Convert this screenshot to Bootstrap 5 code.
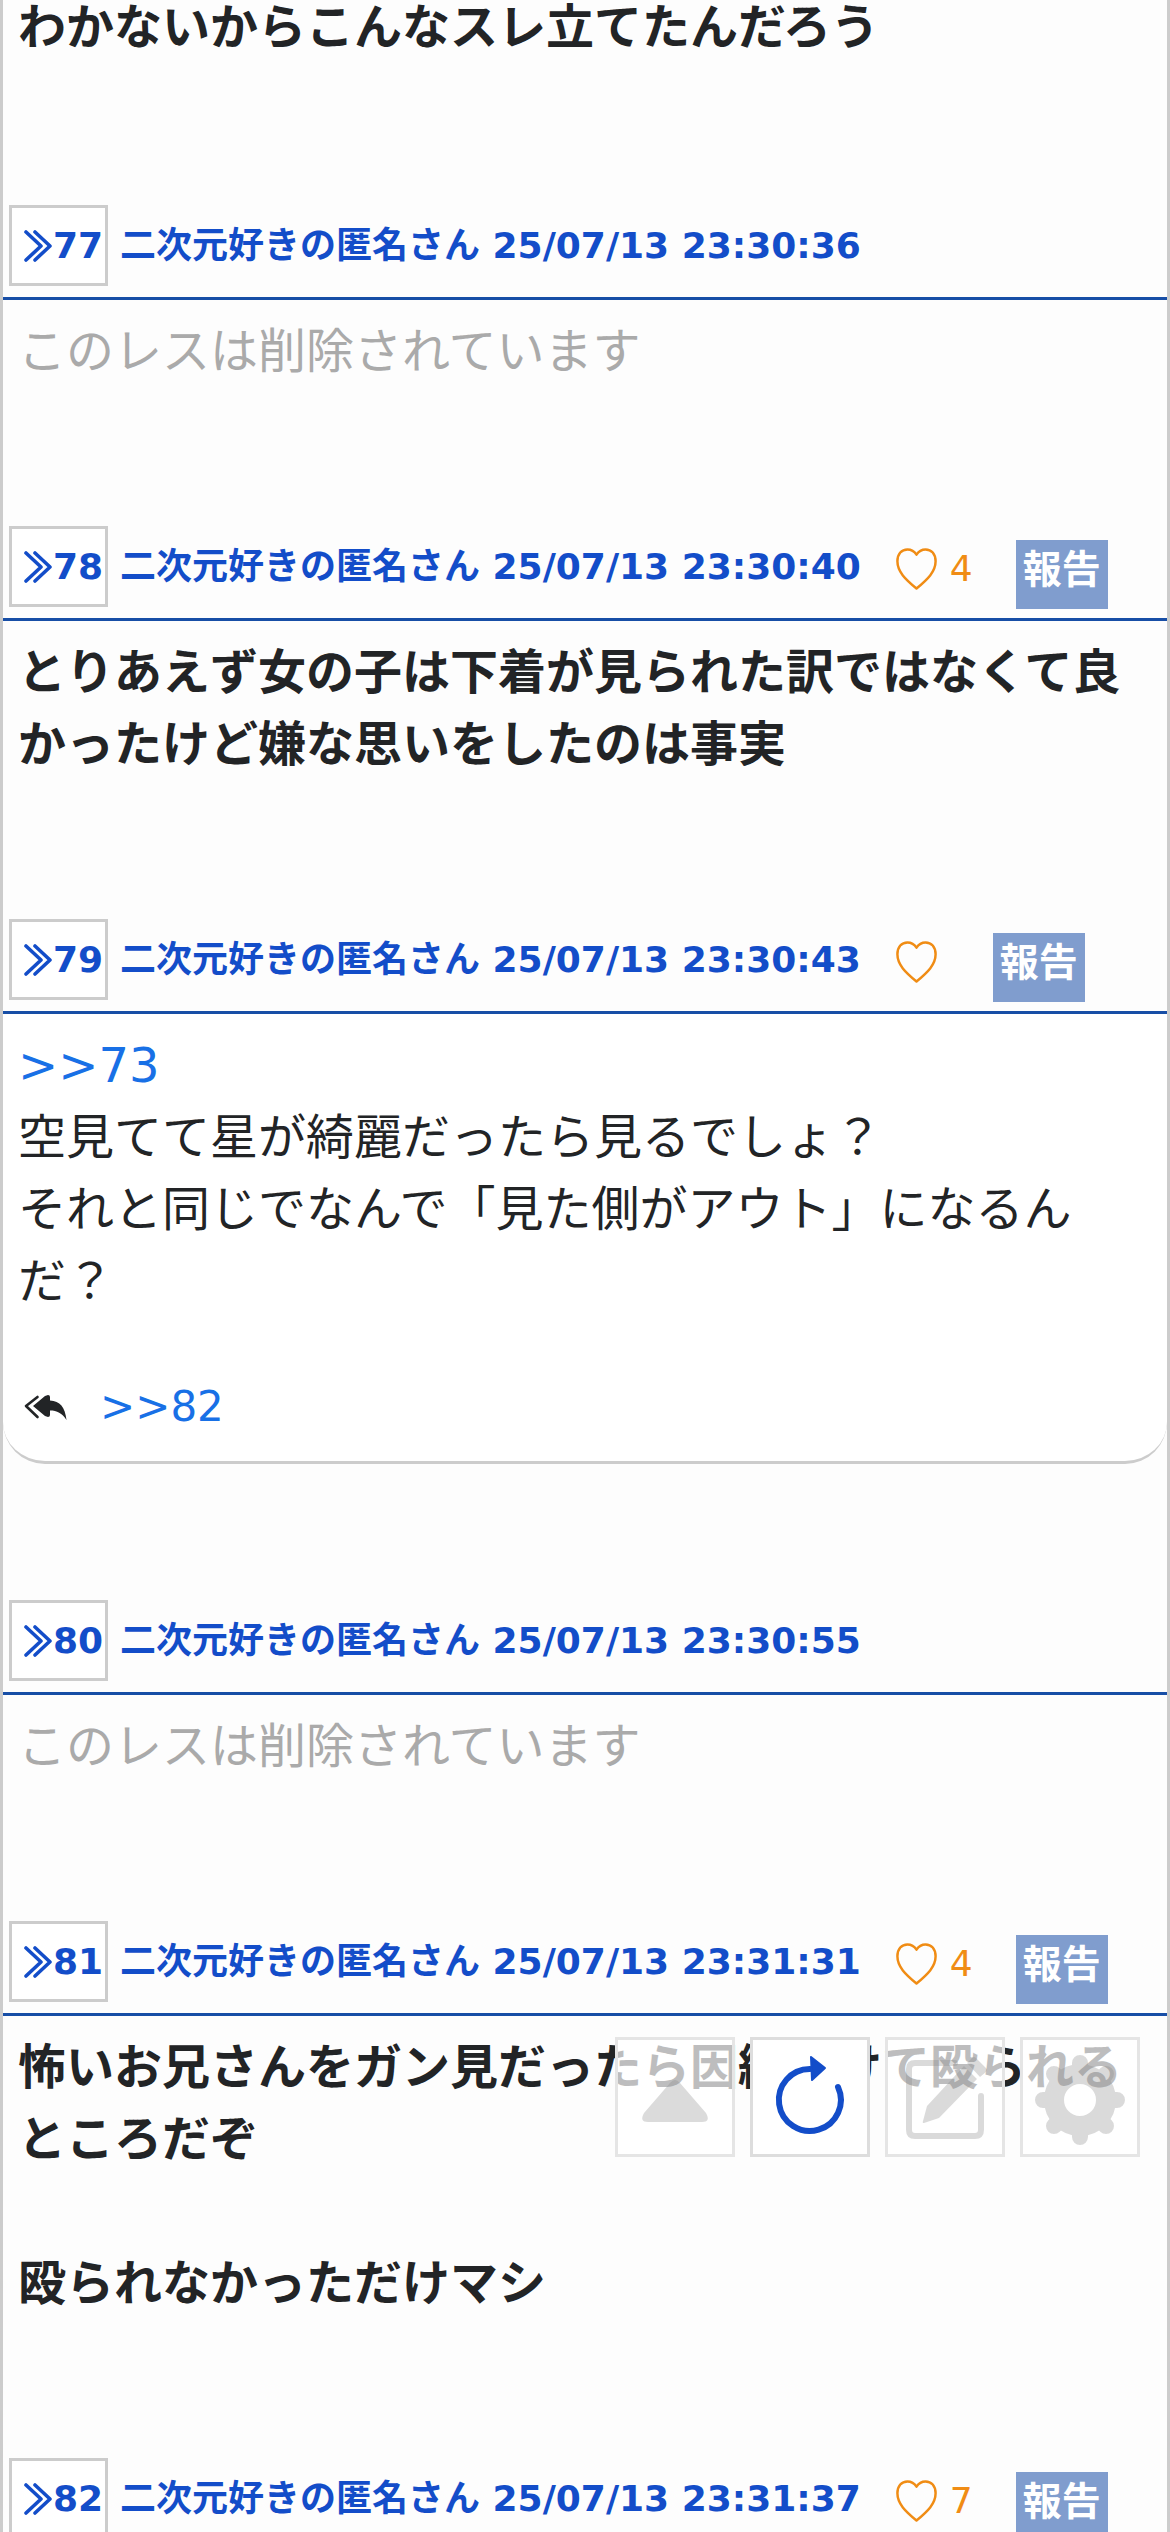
<!DOCTYPE html>
<html lang="ja">
<head>
<meta charset="utf-8">
<meta name="viewport" content="width=device-width, initial-scale=1">
<title>スレッド</title>
<link href="https://cdn.jsdelivr.net/npm/bootstrap@5.3.0/dist/css/bootstrap.min.css" rel="stylesheet">
<style>
  html { overflow: hidden; }
  body { background: #fdfdfd; color: #222426; font-family: "DejaVu Sans", "Noto Sans CJK JP", sans-serif; font-size: 48px; line-height: 72px; overflow: hidden; height: 100vh; }
  a { text-decoration: none; }
  .thread { border: solid #ccc; border-width: 0 3px; }
  .res-head { height: 96px; padding: 1px 6px 11px; border-bottom: 3px solid #174ea6; font-size: 36px; line-height: 54px; }
  .res-no { width: 99px; height: 81px; padding: 0 0 0 12px; background: #fff; border: 3px solid #ccc; color: #134dc9; font-weight: 700; gap: 1px; }
  .res-name { color: #134dc9; margin-left: 12px; }
  .res-like { background: none; border: 0; padding: 0; margin-left: 34px; margin-top: 5px; color: #f08c14; gap: 12px; line-height: 54px; }
  .res-report { height: 69px; padding: 0 7px 8px; margin-left: 43px; margin-top: 15px; background: #809dce; border: 0; color: #fff; font-size: 39px; line-height: 60px; font-weight: 700; }
  .res-body { padding: 15px 15px 138px; }
  .res-cut { margin-top: -9px; padding: 0 15px 141px; }
  .res-gone { color: #aaa; }
  .res-link { color: #1870e6; }
  .res-card { background: #fff; border-bottom: 3px solid #ccc; border-radius: 0 0 42px 42px; padding: 15px 15px 18px; margin-bottom: 135px; }
  .res-replies { font-size: 42px; margin-top: 54px; padding-left: 6px; gap: 32px; }
  .tool-bar { right: 30px; bottom: 375px; gap: 15px; }
  .tool-btn { width: 120px; height: 120px; padding: 0; background: rgba(255,255,255,.7); border: 3px solid #e5e5e5; }
  .tool-btn.is-on { background: #fff; border-color: #ddd; }
  .tool-btn svg { display: block; margin: -3px; }
  .tool-icon { opacity: .3; }
</style>
<script src="https://cdn.jsdelivr.net/npm/bootstrap@5.3.0/dist/js/bootstrap.bundle.min.js"></script>
</head>
<body>
<svg class="d-none" aria-hidden="true">
  <symbol id="quote" viewBox="0 0 28 32"><path d="M2 2 17 16 2 30M11 2 26 16 11 30" fill="none" stroke="currentColor" stroke-width="3.6" stroke-linecap="round" stroke-linejoin="round"/></symbol>
  <symbol id="heart" viewBox="0 0 43 44"><path d="M21.500 7C24 3 27 1.500 31 1.500C37 1.500 41.500 6 41.500 14C41.500 25 33 33 21.500 42.500C10 33 1.500 25 1.500 14C1.500 6 6 1.500 12 1.500C16 1.500 19 3 21.500 7Z" fill="none" stroke="currentColor" stroke-width="2.6" stroke-linejoin="round"/></symbol>
</svg>
<main class="thread">
  <article>
    <div class="res-cut fw-bold">わかないからこんなスレ立てたんだろう</div>
  </article>
  <article>
    <header class="res-head d-flex align-items-center">
      <button class="res-no d-flex align-items-center"><svg width="28" height="32" aria-hidden="true"><use href="#quote"/></svg>77</button>
      <span class="res-name fw-bold">二次元好きの匿名さん 25/07/13 23:30:36</span>
    </header>
    <div class="res-body res-gone">このレスは削除されています</div>
  </article>
  <article>
    <header class="res-head d-flex align-items-center">
      <button class="res-no d-flex align-items-center"><svg width="28" height="32" aria-hidden="true"><use href="#quote"/></svg>78</button>
      <span class="res-name fw-bold">二次元好きの匿名さん 25/07/13 23:30:40</span>
      <button class="res-like d-flex align-items-center" aria-label="いいね"><svg width="43" height="42" aria-hidden="true"><use href="#heart"/></svg><span>4</span></button>
      <button class="res-report">報告</button>
    </header>
    <div class="res-body fw-bold">とりあえず女の子は下着が見られた訳ではなくて良かったけど嫌な思いをしたのは事実</div>
  </article>
  <article>
    <header class="res-head d-flex align-items-center">
      <button class="res-no d-flex align-items-center"><svg width="28" height="32" aria-hidden="true"><use href="#quote"/></svg>79</button>
      <span class="res-name fw-bold">二次元好きの匿名さん 25/07/13 23:30:43</span>
      <button class="res-like d-flex align-items-center" aria-label="いいね"><svg width="43" height="42" aria-hidden="true"><use href="#heart"/></svg><span></span></button>
      <button class="res-report">報告</button>
    </header>
    <div class="res-card">
      <a class="res-link" href="#">&gt;&gt;73</a><br>空見てて星が綺麗だったら見るでしょ？<br>それと同じでなんで「見た側がアウト」になるんだ？
      <div class="res-replies d-flex align-items-center">
        <svg width="44" height="28" viewBox="0 0 44 28" aria-hidden="true"><path d="M13.500 4 2 13 13.500 24" fill="none" stroke="#222426" stroke-width="2.600" stroke-linecap="round" stroke-linejoin="round"/><path d="M24 2Q26 2 26 4V7.500C36 8 41 14 42.500 27C38 20 33 17.500 26 17.500V22Q26 24 24 24L21 23 9 13 21 3Z" fill="#222426"/></svg>
        <a class="res-link" href="#">&gt;&gt;82</a>
      </div>
    </div>
  </article>
  <article>
    <header class="res-head d-flex align-items-center">
      <button class="res-no d-flex align-items-center"><svg width="28" height="32" aria-hidden="true"><use href="#quote"/></svg>80</button>
      <span class="res-name fw-bold">二次元好きの匿名さん 25/07/13 23:30:55</span>
    </header>
    <div class="res-body res-gone">このレスは削除されています</div>
  </article>
  <article>
    <header class="res-head d-flex align-items-center">
      <button class="res-no d-flex align-items-center"><svg width="28" height="32" aria-hidden="true"><use href="#quote"/></svg>81</button>
      <span class="res-name fw-bold">二次元好きの匿名さん 25/07/13 23:31:31</span>
      <button class="res-like d-flex align-items-center" aria-label="いいね"><svg width="43" height="42" aria-hidden="true"><use href="#heart"/></svg><span>4</span></button>
      <button class="res-report">報告</button>
    </header>
    <div class="res-body fw-bold">怖いお兄さんをガン見だったら因縁つけて殴られるところだぞ<br><br>殴られなかっただけマシ</div>
  </article>
  <article>
    <header class="res-head d-flex align-items-center">
      <button class="res-no d-flex align-items-center"><svg width="28" height="32" aria-hidden="true"><use href="#quote"/></svg>82</button>
      <span class="res-name fw-bold">二次元好きの匿名さん 25/07/13 23:31:37</span>
      <button class="res-like d-flex align-items-center" aria-label="いいね"><svg width="43" height="42" aria-hidden="true"><use href="#heart"/></svg><span>7</span></button>
      <button class="res-report">報告</button>
    </header>
  </article>
</main>
<nav class="tool-bar position-fixed d-flex">
  <button class="tool-btn" aria-label="上へ"><svg width="120" height="120"><path class="tool-icon" d="M55 46Q60 40 65 46L91 76Q96 85 87 85H33Q24 85 29 76Z" fill="#888"/></svg></button>
  <button class="tool-btn is-on" aria-label="更新"><svg width="120" height="120"><path d="M88 50A31 31 0 1 1 60 32" fill="none" stroke="#134dc9" stroke-width="6" stroke-linecap="round"/><path d="M61 20 75 31 62 43Z" fill="#134dc9" stroke="#134dc9" stroke-width="2" stroke-linejoin="round"/></svg></button>
  <button class="tool-btn" aria-label="書き込む"><svg width="120" height="120"><g class="tool-icon"><path d="M70 26H30Q24 26 24 32V93Q24 99 30 99H90Q96 99 96 93V59" fill="none" stroke="#888" stroke-width="6" stroke-linecap="round"/><path d="M42 69 79 29 92 42 54 81 39 86Q37 86 38 84ZM82 26 87 21Q89 19 91 21L101 31Q103 33 101 35L95 40Z" fill="#888"/></g></svg></button>
  <button class="tool-btn" aria-label="設定"><svg width="120" height="120"><g class="tool-icon" fill="none" stroke="#888"><circle cx="60" cy="63" r="26" stroke-width="20"/><path d="M60 36V26M60 90V100M33 63H23M87 63H97M41 44 34 37M79 82 86 89M41 82 34 89M79 44 86 37" stroke-width="16" stroke-linecap="round"/><path d="M60 34V31M60 92V95M31 63H28M89 63H92M39 42 37 40M81 84 83 86M39 84 37 86M81 42 83 40" stroke-width="20"/></g></svg></button>
</nav>
</body>
</html>
